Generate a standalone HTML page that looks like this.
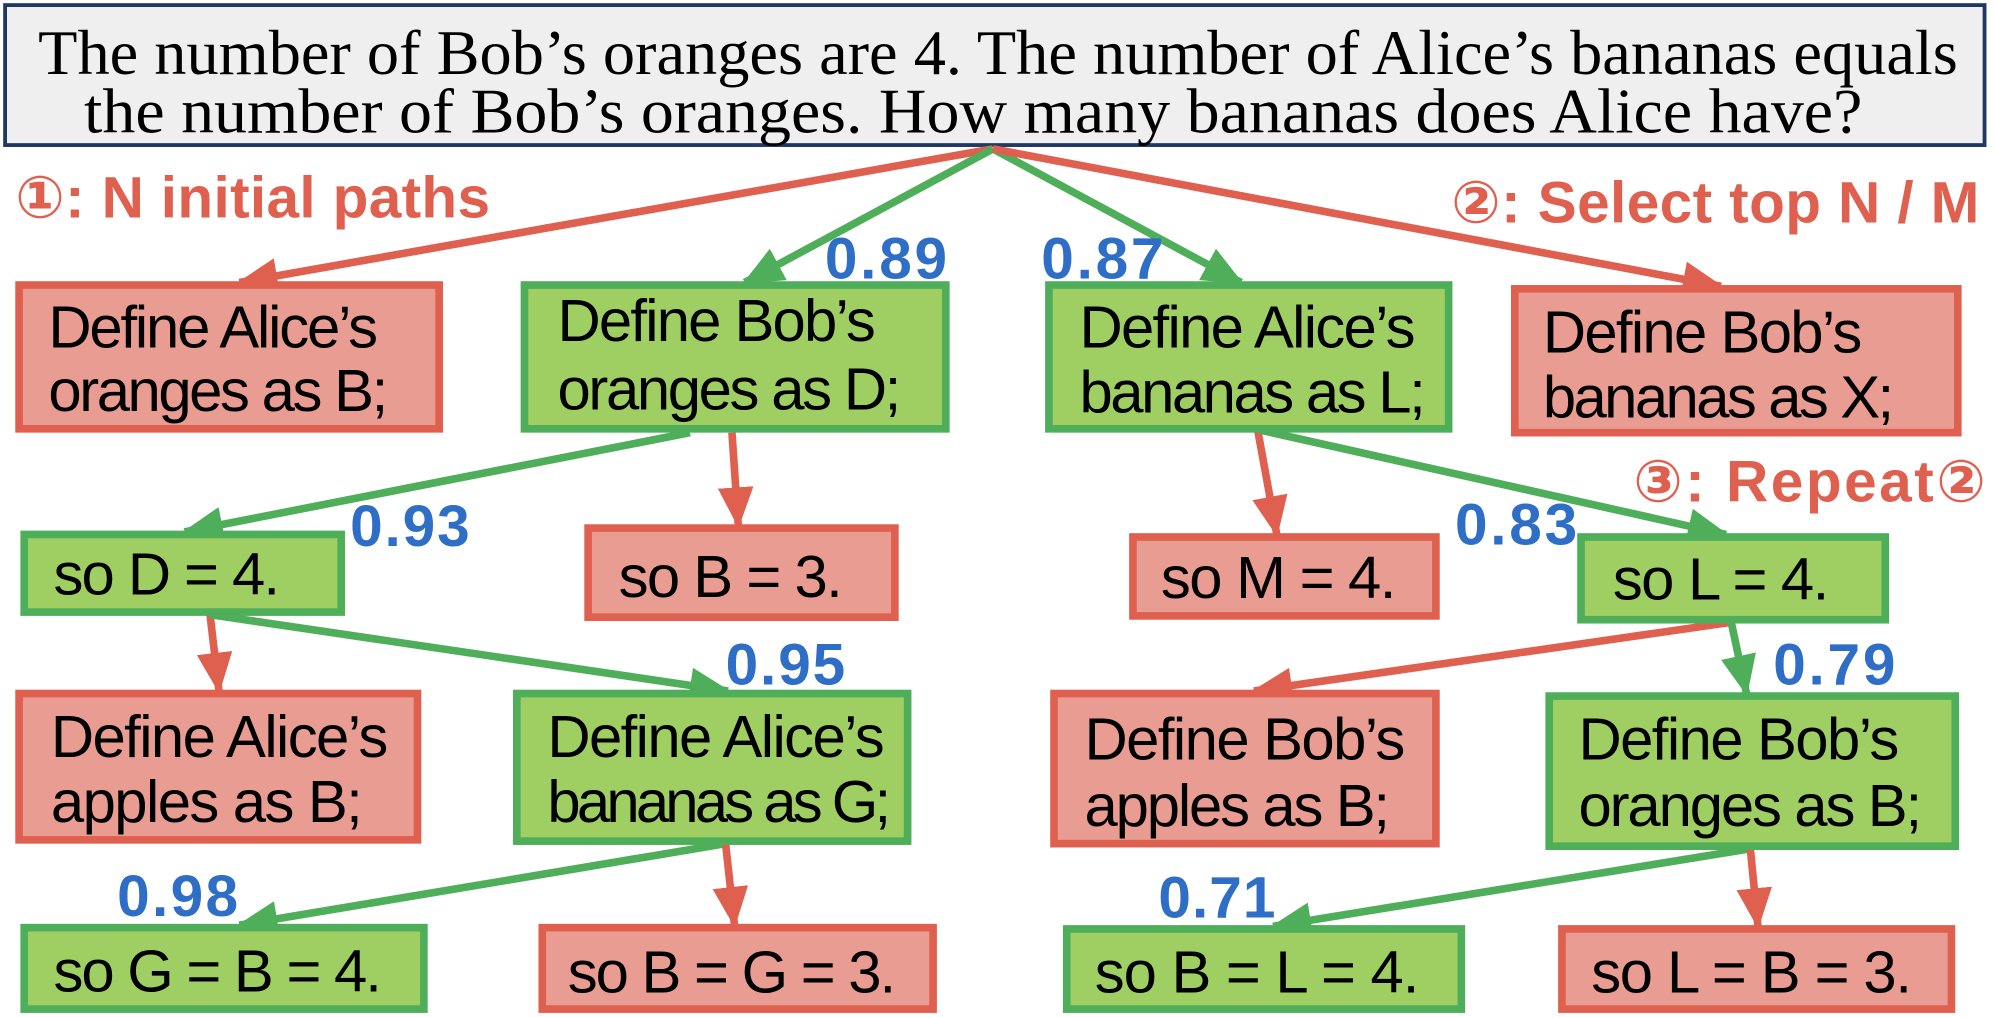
<!DOCTYPE html>
<html><head><meta charset="utf-8"><style>
html,body{margin:0;padding:0;background:#fff;overflow:hidden}
svg{display:block}
.b{font-family:"Liberation Sans",Arial,sans-serif;font-size:47px;fill:#000}
.s{font-family:"Liberation Sans",Arial,sans-serif;font-size:46px;font-weight:bold;fill:#2f6ec6}
.l{font-family:"Liberation Sans","DejaVu Sans",sans-serif;font-size:46px;font-weight:bold;fill:#e06050}
.q{font-family:"Liberation Serif","Times New Roman",serif;font-size:50px;fill:#000}
</style></head><body>
<svg width="1996" height="1018" viewBox="0 0 1568 800" preserveAspectRatio="none" xmlns="http://www.w3.org/2000/svg">
<defs>
<marker id="ar" markerUnits="userSpaceOnUse" markerWidth="32" markerHeight="28" refX="30" refY="14" orient="auto"><path d="M0,0 L32,14 L0,28 Z" fill="#e06050"/></marker>
<marker id="ag" markerUnits="userSpaceOnUse" markerWidth="32" markerHeight="28" refX="30" refY="14" orient="auto"><path d="M0,0 L32,14 L0,28 Z" fill="#4fae5a"/></marker>
</defs>
<rect x="4" y="4" width="1555" height="110" fill="#efefef" stroke="#1f3864" stroke-width="3"/>
<text class="q" x="30" y="58" textLength="1508" lengthAdjust="spacingAndGlyphs">The number of Bob’s oranges are 4. The number of Alice’s bananas equals</text>
<text class="q" x="66" y="104" textLength="1397" lengthAdjust="spacingAndGlyphs">the number of Bob’s oranges. How many bananas does Alice have?</text>

<g stroke-width="6" fill="none">
<line x1="780" y1="117" x2="188" y2="222" stroke="#e06050" marker-end="url(#ar)"/>
<line x1="780" y1="117" x2="585" y2="222" stroke="#4fae5a" marker-end="url(#ag)"/>
<line x1="780" y1="117" x2="975" y2="222" stroke="#4fae5a" marker-end="url(#ag)"/>
<line x1="780" y1="117" x2="1352" y2="225" stroke="#e06050" marker-end="url(#ar)"/>
<line x1="542" y1="340" x2="145" y2="418" stroke="#4fae5a" marker-end="url(#ag)"/>
<line x1="575" y1="340" x2="580" y2="413" stroke="#e06050" marker-end="url(#ar)"/>
<line x1="988" y1="338" x2="1003" y2="420" stroke="#e06050" marker-end="url(#ar)"/>
<line x1="990" y1="338" x2="1356" y2="420" stroke="#4fae5a" marker-end="url(#ag)"/>
<line x1="165" y1="483" x2="172" y2="543" stroke="#e06050" marker-end="url(#ar)"/>
<line x1="165" y1="483" x2="572" y2="543" stroke="#4fae5a" marker-end="url(#ag)"/>
<line x1="1360" y1="489" x2="985" y2="543" stroke="#e06050" marker-end="url(#ar)"/>
<line x1="1360" y1="489" x2="1372" y2="545" stroke="#4fae5a" marker-end="url(#ag)"/>
<line x1="570" y1="663" x2="188" y2="727" stroke="#4fae5a" marker-end="url(#ag)"/>
<line x1="570" y1="663" x2="577" y2="727" stroke="#e06050" marker-end="url(#ar)"/>
<line x1="1375" y1="667" x2="1000" y2="728" stroke="#4fae5a" marker-end="url(#ag)"/>
<line x1="1375" y1="667" x2="1381" y2="728" stroke="#e06050" marker-end="url(#ar)"/>
</g>

<g stroke-width="6">
<rect x="15" y="224" width="330" height="113" fill="#e89c92" stroke="#e06050"/>
<rect x="412" y="224" width="331" height="113" fill="#9fcf62" stroke="#4fae5a"/>
<rect x="824" y="224" width="314" height="113" fill="#9fcf62" stroke="#4fae5a"/>
<rect x="1190" y="227" width="348" height="113" fill="#e89c92" stroke="#e06050"/>
<rect x="19" y="420" width="249" height="61" fill="#9fcf62" stroke="#4fae5a"/>
<rect x="462" y="415" width="241" height="70" fill="#e89c92" stroke="#e06050"/>
<rect x="890" y="422" width="238" height="62" fill="#e89c92" stroke="#e06050"/>
<rect x="1242" y="422" width="239" height="65" fill="#9fcf62" stroke="#4fae5a"/>
<rect x="15" y="545" width="313" height="115" fill="#e89c92" stroke="#e06050"/>
<rect x="406" y="545" width="307" height="116" fill="#9fcf62" stroke="#4fae5a"/>
<rect x="828" y="545" width="300" height="118" fill="#e89c92" stroke="#e06050"/>
<rect x="1217" y="547" width="319" height="118" fill="#9fcf62" stroke="#4fae5a"/>
<rect x="19" y="729" width="314" height="64" fill="#9fcf62" stroke="#4fae5a"/>
<rect x="426" y="729" width="307" height="64" fill="#e89c92" stroke="#e06050"/>
<rect x="838" y="730" width="310" height="63" fill="#9fcf62" stroke="#4fae5a"/>
<rect x="1227" y="730" width="306" height="63" fill="#e89c92" stroke="#e06050"/>
</g>

<g lengthAdjust="spacingAndGlyphs">
<text class="b" x="38" y="273" textLength="259">Define Alice’s</text><text class="b" x="38" y="323" textLength="267">oranges as B;</text>
<text class="b" x="438" y="268" textLength="250">Define Bob’s</text><text class="b" x="438" y="322" textLength="270">oranges as D;</text>
<text class="b" x="848" y="273" textLength="264">Define Alice’s</text><text class="b" x="848" y="324" textLength="272">bananas as L;</text>
<text class="b" x="1212" y="277" textLength="251">Define Bob’s</text><text class="b" x="1212" y="328" textLength="276">bananas as X;</text>
<text class="b" x="42" y="467" textLength="178">so D = 4.</text>
<text class="b" x="486" y="469" textLength="176">so B = 3.</text>
<text class="b" x="912" y="470" textLength="185">so M = 4.</text>
<text class="b" x="1267" y="471" textLength="170">so L = 4.</text>
<text class="b" x="40" y="595" textLength="265">Define Alice’s</text><text class="b" x="40" y="646" textLength="245">apples as B;</text>
<text class="b" x="430" y="595" textLength="265">Define Alice’s</text><text class="b" x="430" y="646" textLength="270">bananas as G;</text>
<text class="b" x="852" y="597" textLength="252">Define Bob’s</text><text class="b" x="852" y="649" textLength="240">apples as B;</text>
<text class="b" x="1240" y="597" textLength="252">Define Bob’s</text><text class="b" x="1240" y="649" textLength="270">oranges as B;</text>
<text class="b" x="42" y="779" textLength="258">so G = B = 4.</text>
<text class="b" x="446" y="780" textLength="258">so B = G = 3.</text>
<text class="b" x="860" y="780" textLength="255">so B = L = 4.</text>
<text class="b" x="1250" y="780" textLength="252">so L = B = 3.</text>

<text class="s" x="648" y="219" textLength="96">0.89</text>
<text class="s" x="818" y="219" textLength="96">0.87</text>
<text class="s" x="275" y="429" textLength="94">0.93</text>
<text class="s" x="1143" y="428" textLength="96">0.83</text>
<text class="s" x="570" y="538" textLength="94">0.95</text>
<text class="s" x="1393" y="538" textLength="96">0.79</text>
<text class="s" x="92" y="720" textLength="95">0.98</text>
<text class="s" x="910" y="721" textLength="92">0.71</text>

<text class="l" x="12" y="171" textLength="373">①: N initial paths</text>
<text class="l" x="1140" y="175" textLength="415">②: Select top N / M</text>
<text class="l" x="1283" y="394" textLength="277">③: Repeat②</text>
</g>
</svg>
</body></html>
